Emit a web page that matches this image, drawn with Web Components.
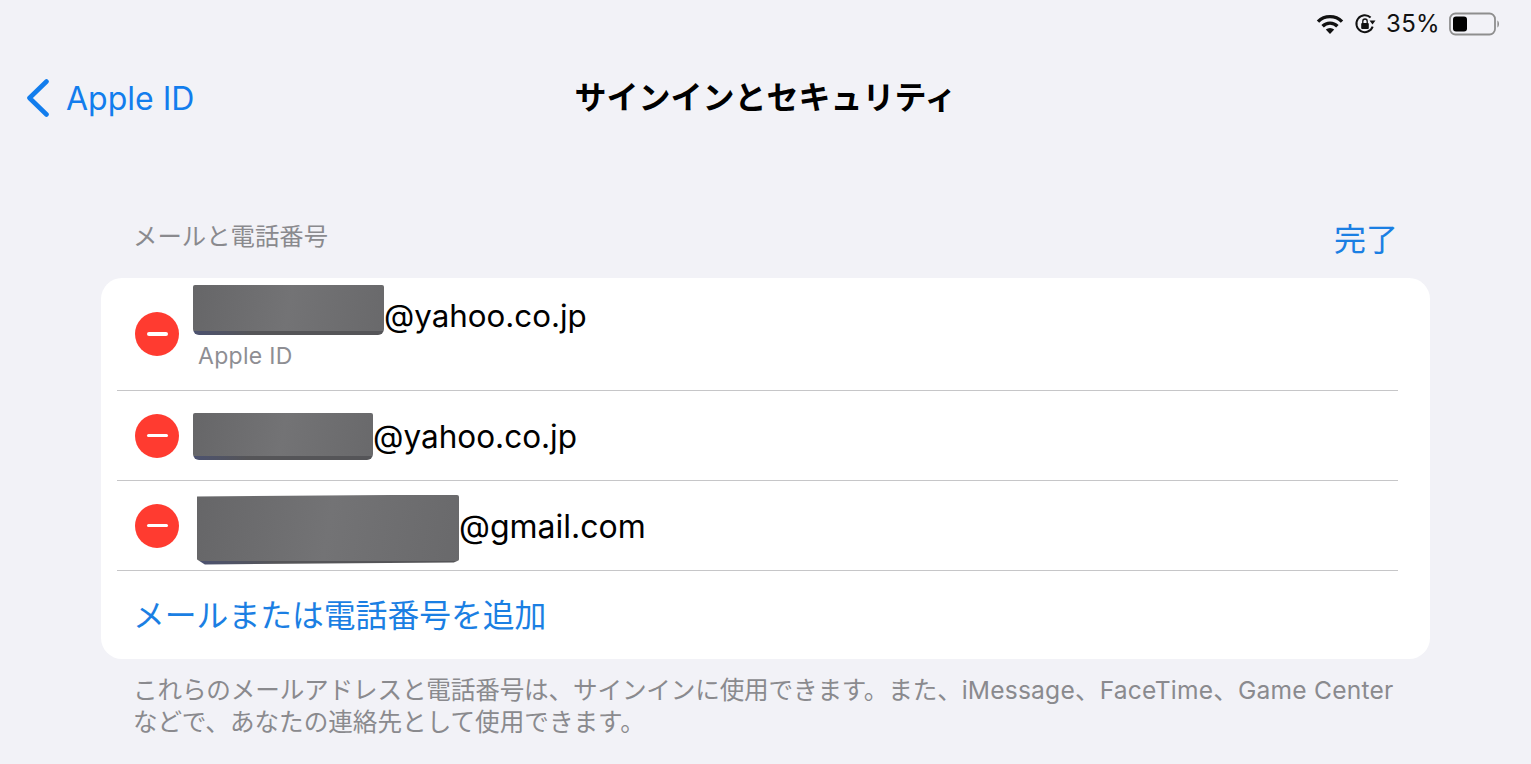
<!DOCTYPE html>
<html lang="ja">
<head>
<meta charset="utf-8">
<title>サインインとセキュリティ</title>
<style>
html, body { margin: 0; height: 100%; background: #f2f2f7; overflow: hidden; }
body { font-family: Inter, "Noto Sans CJK JP", sans-serif; }
</style>
</head>
<body>
<security-page>
  <status-bar></status-bar>
  <nav-bar back="Apple ID" title="サインインとセキュリティ"></nav-bar>
  <section-head label="メールと電話番号" action="完了"></section-head>
  <list-card>
    <mail-row size="191" bar-height="50" shift="-6" font="31.3" domain="@yahoo.co.jp" sub="Apple ID" style="height:113px"></mail-row>
    <mail-row size="180" bar-height="47" domain="@yahoo.co.jp"></mail-row>
    <mail-row size="262" bar-height="70" shift="3" pad="4" font="32" tilt domain="@gmail.com"></mail-row>
    <add-row>メールまたは電話番号を追加</add-row>
  </list-card>
  <foot-note><span style="letter-spacing:-0.15px">これらのメールアドレスと電話番号は、サインインに使用できます。また、</span><span style="letter-spacing:0.2px">iMessage、FaceTime、Game Center</span><br>などで、あなたの連絡先として使用できます。</foot-note>
</security-page>

<script>
class SecurityPage extends HTMLElement {
  constructor() {
    super();
    this.attachShadow({ mode: 'open' }).innerHTML = `
      <style>
      :host { display: flex; flex-direction: column; width: 1531px; height: 764px; color: #000; }
      </style>
      <slot></slot>`;
  }
}

class StatusBar extends HTMLElement {
  constructor() {
    super();
    this.attachShadow({ mode: 'open' }).innerHTML = `
      <style>
      :host { display: flex; justify-content: flex-end; align-items: center; height: 48px; padding-right: 32px; box-sizing: border-box; font-size: 24px; color: #111; }
      svg { display: block; }
      .wifi { margin-right: 10px; }
      .lock { margin-right: 10px; }
      .pct { margin: 0 9px 2px 0; letter-spacing: 0.3px; }
      </style>
      <svg class="wifi" width="28" height="22" viewBox="0 0 28 22">
        <path d="M2 8.6a17 17 0 0 1 24 0" fill="none" stroke="#111" stroke-width="3.4" stroke-linecap="butt"/>
        <path d="M6.6 13.2a10.5 10.5 0 0 1 14.8 0" fill="none" stroke="#111" stroke-width="3.4"/>
        <path d="M14 21l-4.2-4.4a6 6 0 0 1 8.4 0z" fill="#111"/>
      </svg>
      <svg class="lock" width="22" height="22" viewBox="0 0 22 22">
        <path d="M18.7 13.6A8.4 8.4 0 1 1 16.6 4.6" fill="none" stroke="#111" stroke-width="2"/>
        <path d="M15.5 7.6h6l-3 4z" fill="#111"/>
        <rect x="7.2" y="10" width="7.6" height="6" rx="1" fill="#111"/>
        <path d="M8.8 10V8.2a2.2 2.2 0 0 1 4.4 0V10" fill="none" stroke="#111" stroke-width="1.3"/>
      </svg>
      <span class="pct">35%</span>
      <svg width="50" height="24" viewBox="0 0 50 24">
        <rect x="1" y="1.5" width="45" height="21" rx="5.5" fill="none" stroke="#8e8e8e" stroke-width="1.8"/>
        <rect x="4" y="4.5" width="14" height="15" rx="3" fill="#000"/>
        <path d="M48.4 8.5c1.2.6 1.6 2 1.6 3.5s-.4 2.9-1.6 3.5z" fill="#8e8e8e"/>
      </svg>`;
  }
}

class NavBar extends HTMLElement {
  constructor() {
    super();
    this.attachShadow({ mode: 'open' }).innerHTML = `
      <style>
      :host { display: grid; grid-template-columns: 1fr auto 1fr; align-items: center; height: 100px; padding-left: 26px; box-sizing: border-box; }
      .back { display: flex; align-items: center; gap: 16px; color: #127ded; font-size: 32px; }
      svg { display: block; }
      .title { font-size: 32px; font-weight: 700; margin-left: -26px; position: relative; top: -3px; }
      </style>
      <div class="back">
        <svg width="24" height="38" viewBox="0 0 24 38"><path d="M20.5 2.5L3.5 19l17 16.5" fill="none" stroke="#127ded" stroke-width="4.6" stroke-linecap="round" stroke-linejoin="round"/></svg>
        <span>${this.getAttribute('back')}</span>
      </div>
      <div class="title">${this.getAttribute('title')}</div>
      <div></div>`;
  }
}

class SectionHead extends HTMLElement {
  constructor() {
    super();
    this.attachShadow({ mode: 'open' }).innerHTML = `
      <style>
      :host { display: flex; justify-content: space-between; align-items: flex-end; height: 130px; box-sizing: border-box; padding: 0 133px 18px 133px; }
      .label { font-size: 24.4px; color: #8a8a8e; margin-bottom: 8px; }
      .action { font-size: 32px; color: #1b7fe3; }
      </style>
      <span class="label">${this.getAttribute('label')}</span>
      <span class="action">${this.getAttribute('action')}</span>`;
  }
}

class ListCard extends HTMLElement {
  constructor() {
    super();
    this.attachShadow({ mode: 'open' }).innerHTML = `
      <style>
      :host { display: flex; flex-direction: column; height: 381px; margin: 0 101px; background: #fff; border-radius: 21px; overflow: hidden; }
      </style>
      <slot></slot>`;
  }
}

class MailRow extends HTMLElement {
  constructor() {
    super();
    const size = this.getAttribute('size');
    const barHeight = this.getAttribute('bar-height');
    const pad = this.getAttribute('pad') || 0;
    const shift = Number(this.getAttribute('shift') || 0);
    const font = this.getAttribute('font') || 31.5;
    const sub = this.getAttribute('sub');
    const tilt = this.hasAttribute('tilt') ? 'clip-path: polygon(0 2px, 100% 0, 100% 94%, 98% 97%, 3% 100%, 0 93%);' : '';
    this.attachShadow({ mode: 'open' }).innerHTML = `
      <style>
      :host { display: flex; align-items: center; height: 90px; margin: 0 32px 0 16px; padding-left: 18px; border-bottom: 1px solid #c6c6c8; box-sizing: border-box; }
      .minus { width: 44px; height: 44px; flex: none; border-radius: 50%; background: #ff3b30; display: flex; align-items: center; justify-content: center; margin-right: 14px; }
      .minus i { display: block; width: 21px; height: 3.5px; border-radius: 2px; background: #fff; }
      .body { display: flex; flex-direction: column; padding-top: 2px; ${sub ? 'padding: 0 0 8px;' : ''} }
      .mail { display: flex; align-items: center; font-size: ${font}px; padding-left: ${pad}px; }
      .bar { width: ${size}px; height: ${barHeight}px; margin: ${shift}px 0 ${-shift}px; background: linear-gradient(90deg, #4c5270, #555558 30%) bottom / 100% 4px no-repeat, linear-gradient(100deg, #666668, #737375 50%, #69696b); border-radius: 2px 2px 6px 6px; ${tilt} }
      .sub { font-size: 23px; color: #8e8e93; margin: 1px 0 0 5px; letter-spacing: 0.3px; }
      </style>
      <span class="minus"><i></i></span>
      <div class="body">
        <div class="mail"><span class="bar"></span><span>${this.getAttribute('domain')}</span></div>
        ${sub ? `<div class="sub">${sub}</div>` : ''}
      </div>`;
  }
}

class AddRow extends HTMLElement {
  constructor() {
    super();
    this.attachShadow({ mode: 'open' }).innerHTML = `
      <style>
      :host { display: flex; align-items: center; flex: 1; padding: 0 0 4px 32px; color: #1b7fe3; font-size: 31.8px; }
      </style>
      <slot></slot>`;
  }
}

class FootNote extends HTMLElement {
  constructor() {
    super();
    this.attachShadow({ mode: 'open' }).innerHTML = `
      <style>
      :host { display: block; padding: 15px 0 0 133px; font-size: 24.6px; line-height: 32px; color: #8a8a8e; white-space: nowrap; }
      </style>
      <slot></slot>`;
  }
}

customElements.define('security-page', SecurityPage);
customElements.define('status-bar', StatusBar);
customElements.define('nav-bar', NavBar);
customElements.define('section-head', SectionHead);
customElements.define('list-card', ListCard);
customElements.define('mail-row', MailRow);
customElements.define('add-row', AddRow);
customElements.define('foot-note', FootNote);
</script>
</body>
</html>
